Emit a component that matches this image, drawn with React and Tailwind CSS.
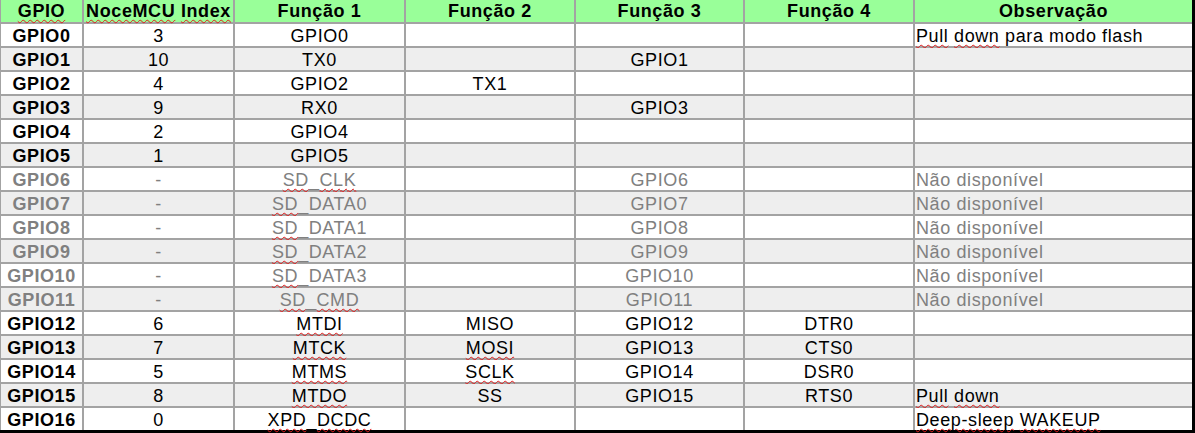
import React from 'react';

const headers = ['~GPIO~', '~NoceMCU~ ~Index~', 'Função 1', 'Função 2', 'Função 3', 'Função 4', 'Observação'];

// ~word~ marks the words the spell checker flags with a red wave
const rows = [
  ['GPIO0', '3', 'GPIO0', '', '', '', '~Pull~ ~down~ para modo flash'],
  ['GPIO1', '10', 'TX0', '', 'GPIO1', '', ''],
  ['GPIO2', '4', 'GPIO2', 'TX1', '', '', ''],
  ['GPIO3', '9', 'RX0', '', 'GPIO3', '', ''],
  ['GPIO4', '2', 'GPIO4', '', '', '', ''],
  ['GPIO5', '1', 'GPIO5', '', '', '', ''],
  ['GPIO6', '-', '~SD~_~CLK~', '', 'GPIO6', '', 'Não disponível', true],
  ['GPIO7', '-', '~SD~_DATA0', '', 'GPIO7', '', 'Não disponível', true],
  ['GPIO8', '-', '~SD~_DATA1', '', 'GPIO8', '', 'Não disponível', true],
  ['GPIO9', '-', '~SD~_DATA2', '', 'GPIO9', '', 'Não disponível', true],
  ['GPIO10', '-', '~SD~_DATA3', '', 'GPIO10', '', 'Não disponível', true],
  ['GPIO11', '-', '~SD~_~CMD~', '', 'GPIO11', '', 'Não disponível', true],
  ['GPIO12', '6', '~MTDI~', 'MISO', 'GPIO12', 'DTR0', ''],
  ['GPIO13', '7', '~MTCK~', '~MOSI~', 'GPIO13', 'CTS0', ''],
  ['GPIO14', '5', '~MTMS~', '~SCLK~', 'GPIO14', 'DSR0', ''],
  ['GPIO15', '8', '~MTDO~', 'SS', 'GPIO15', 'RTS0', '~Pull~ ~down~'],
  ['GPIO16', '0', '~XPD~_~DCDC~', '', '', '', '~Deep-sleep~ ~WAKEUP~'],
];

const Marked = ({ text }) => {
  const parts = text.split('~');
  return parts.map((part, i) =>
    i % 2 === 1 ? (
      <span
        key={i}
        className="underline decoration-wavy decoration-[#e01b1b] decoration-1 underline-offset-[2px]"
      >
        {part}
      </span>
    ) : (
      <React.Fragment key={i}>{part}</React.Fragment>
    )
  );
};

const App = () => {
  return (
    <div className="w-[1195px] h-[433px] bg-white font-['Liberation_Sans',Arial,sans-serif] text-[18px] tracking-[0.6px] text-black">
      <div className="grid grid-cols-[81px_149px_169px_168px_167px_168px_277px] gap-[2px] bg-[#a3a3a3] pl-[1px] border-r-[3px] border-b-[3px] border-black">
        {headers.map((h) => (
          <div
            key={h}
            className="h-[22px] pt-[1px] leading-[20px] bg-[#99ff99] font-bold text-center whitespace-nowrap"
          >
            <Marked text={h} />
          </div>
        ))}

        {rows.map((row, r) => {
          const muted = row[7] === true;
          const bg = r % 2 === 1 ? 'bg-[#eeeeee]' : 'bg-white';
          const color = muted ? 'text-[#808080]' : 'text-black';
          return row.slice(0, 7).map((cell, c) => (
            <div
              key={`${r}-${c}`}
              className={`h-[22px] pt-[2px] leading-[21px] whitespace-nowrap ${bg} ${color} ${
                c === 6 ? 'text-left pl-[1px]' : 'text-center'
              } ${c === 0 ? 'font-bold' : ''}`}
            >
              <Marked text={cell} />
            </div>
          ));
        })}
      </div>
    </div>
  );
};

export default App;
